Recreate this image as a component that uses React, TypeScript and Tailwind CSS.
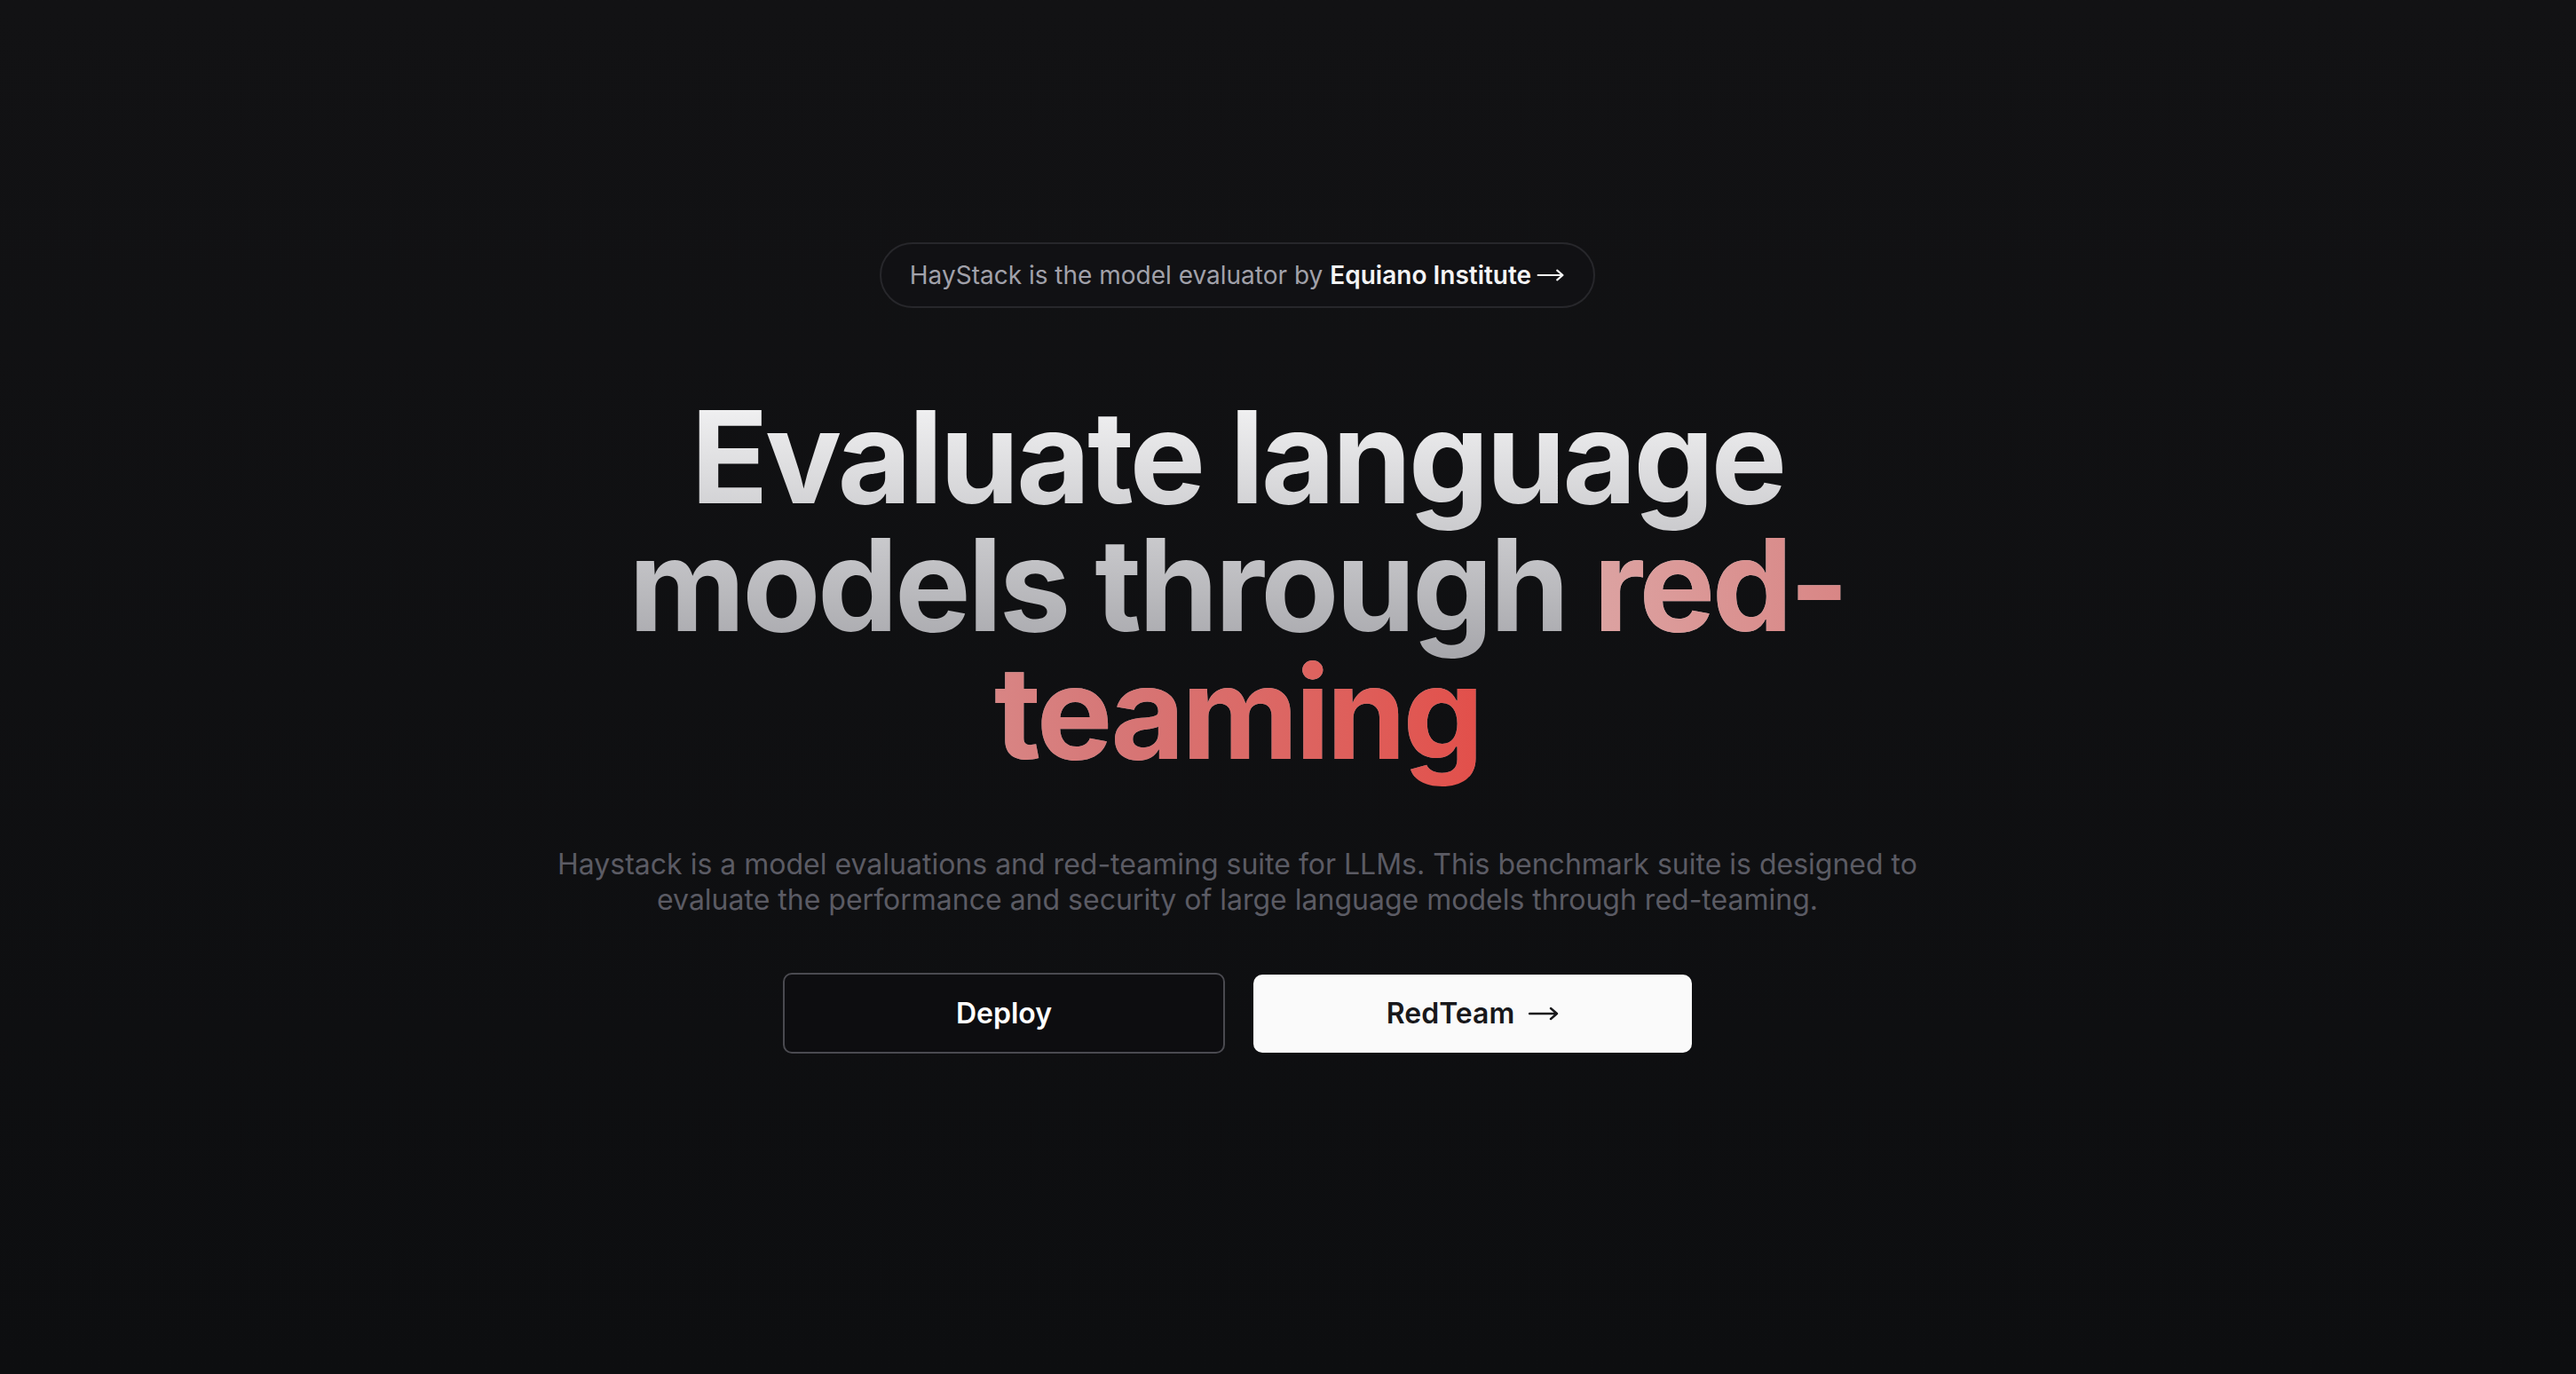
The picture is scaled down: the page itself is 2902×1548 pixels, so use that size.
function LongArrow({ className }: { className?: string }) {
  return (
    <svg viewBox="0 0 34 20" fill="none" className={className} aria-hidden="true">
      <path d="M1 10h31M25 4l7 6-7 6" stroke="currentColor" strokeWidth="2.4" strokeLinecap="round" strokeLinejoin="round" />
    </svg>
  )
}

export default function App() {
  return (
    <div
      className="min-h-screen w-full bg-gradient-to-b from-[#121214] to-[#0d0e10] text-white"
      style={{ fontFamily: "Inter, 'Noto Sans', sans-serif" }}
    >
      <main className="flex flex-col items-center pt-[273px] pr-[114px] pb-[300px]">
        {/* Announcement pill */}
        <a
          href="#"
          className="flex h-[74px] items-center rounded-full border-2 border-[#27272b] bg-[#111114] px-8 text-[28px] text-[#a1a1aa]"
        >
          <span>HayStack is the model evaluator by</span>
          <span className="ml-2 font-semibold text-[#f4f4f5]">Equiano Institute</span>
          <LongArrow className="ml-1.5 h-[18px] w-[32px] text-[#f4f4f5]" />
        </a>

        {/* Headline */}
        <h1 className="mt-[96px] max-w-[1536px] bg-gradient-to-b from-[#f4f4f5] to-[#86868c] bg-clip-text text-center text-[144px] font-bold leading-none tracking-tight text-transparent">
          Evaluate language models through{" "}
          <span className="bg-gradient-to-r from-[#dca3a2] via-[#d67777] to-[#e24f4a] bg-clip-text text-transparent">
            red-teaming
          </span>
        </h1>

        {/* Description */}
        <p className="mt-[79px] max-w-[1536px] text-center text-[32px] leading-[40px] text-[#5b5b64]">
          Haystack is a model evaluations and red-teaming suite for LLMs. This benchmark suite is designed to
          evaluate the performance and security of large language models through red-teaming.
        </p>

        {/* Actions */}
        <div className="mt-[62px] flex items-center gap-8">
          <button className="flex h-[91px] w-[498px] items-center justify-center rounded-[10px] border-2 border-[#4a4a50] bg-[#0d0d10] text-[32px] font-semibold text-white">
            Deploy
          </button>
          <button className="flex h-[88px] w-[494px] items-center justify-center gap-4 rounded-[10px] bg-[#fafafa] text-[32px] font-semibold text-[#18181b]">
            RedTeam
            <LongArrow className="h-[20px] w-[34px]" />
          </button>
        </div>
      </main>
    </div>
  )
}
